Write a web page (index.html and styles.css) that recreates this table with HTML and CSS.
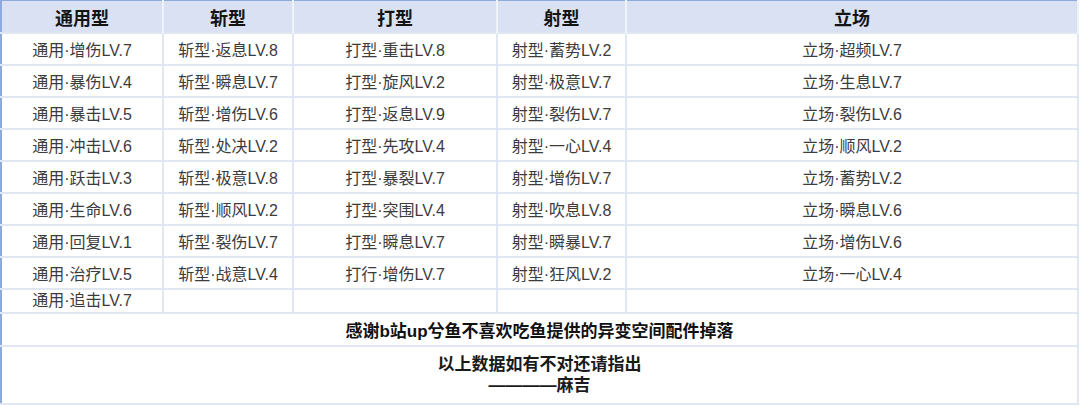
FILE: index.html
```html
<!DOCTYPE html>
<html lang="zh">
<head>
<meta charset="utf-8">
<link rel="stylesheet" href="styles.css">
</head>
<body>
<table class="tbl">
  <colgroup>
    <col class="c1"><col class="c2"><col class="c3"><col class="c4"><col class="c5">
  </colgroup>
  <thead>
    <tr class="head">
      <th>通用型</th><th>斩型</th><th>打型</th><th>射型</th><th>立场</th>
    </tr>
  </thead>
  <tbody>
    <tr class="row"><td>通用·增伤LV.7</td><td>斩型·返息LV.8</td><td>打型·重击LV.8</td><td>射型·蓄势LV.2</td><td>立场·超频LV.7</td></tr>
    <tr class="row"><td>通用·暴伤LV.4</td><td>斩型·瞬息LV.7</td><td>打型·旋风LV.2</td><td>射型·极意LV.7</td><td>立场·生息LV.7</td></tr>
    <tr class="row"><td>通用·暴击LV.5</td><td>斩型·增伤LV.6</td><td>打型·返息LV.9</td><td>射型·裂伤LV.7</td><td>立场·裂伤LV.6</td></tr>
    <tr class="row"><td>通用·冲击LV.6</td><td>斩型·处决LV.2</td><td>打型·先攻LV.4</td><td>射型·一心LV.4</td><td>立场·顺风LV.2</td></tr>
    <tr class="row"><td>通用·跃击LV.3</td><td>斩型·极意LV.8</td><td>打型·暴裂LV.7</td><td>射型·增伤LV.7</td><td>立场·蓄势LV.2</td></tr>
    <tr class="row"><td>通用·生命LV.6</td><td>斩型·顺风LV.2</td><td>打型·突围LV.4</td><td>射型·吹息LV.8</td><td>立场·瞬息LV.6</td></tr>
    <tr class="row"><td>通用·回复LV.1</td><td>斩型·裂伤LV.7</td><td>打型·瞬息LV.7</td><td>射型·瞬暴LV.7</td><td>立场·增伤LV.6</td></tr>
    <tr class="row"><td>通用·治疗LV.5</td><td>斩型·战意LV.4</td><td>打行·增伤LV.7</td><td>射型·狂风LV.2</td><td>立场·一心LV.4</td></tr>
    <tr class="row short"><td>通用·追击LV.7</td><td></td><td></td><td></td><td></td></tr>
    <tr class="thanks"><td colspan="5">感谢b站up兮鱼不喜欢吃鱼提供的异变空间配件掉落</td></tr>
    <tr class="note"><td colspan="5"><div>以上数据如有不对还请指出</div><div>————麻吉</div></td></tr>
  </tbody>
</table>
</body>
</html>
```
FILE: styles.css
```css
html, body {
  margin: 0;
  padding: 0;
  background: #ffffff;
}
body {
  font-family: "Liberation Sans", "Noto Sans CJK SC", sans-serif;
}
.tbl {
  width: 1077px;
  table-layout: fixed;
  border-collapse: collapse;
  border-top: 1px solid #8ea9db;
  border-left: 2px solid #8ea9db;
}
.c1 { width: 162px; }
.c2 { width: 130px; }
.c3 { width: 204px; }
.c4 { width: 129px; }
.c5 { width: 452px; }
.tbl td, .tbl th {
  padding: 0;
  text-align: center;
  vertical-align: middle;
  border: 2px solid #e1e7f2;
}
.head th {
  height: 31px;
  background: #d9e1f2;
  font-size: 18px;
  font-weight: bold;
  color: #141414;
  border-color: #eef2f9;
  border-bottom: 1px solid #c3cfe9;
  border-top: none;
}
.head th:first-child { border-left: none; }
.row td {
  height: 30px;
  font-size: 16px;
  color: #3c3c3c;
}
.row td:first-child,
.thanks td,
.note td { border-left: none; }
.row.short td {
  height: 22px;
  line-height: 20px;
}
.thanks td {
  height: 31px;
  font-size: 17px;
  font-weight: bold;
  color: #111111;
}
.note td {
  height: 56px;
  font-size: 17px;
  font-weight: bold;
  color: #1a1a1a;
  line-height: 21px;
}
```
